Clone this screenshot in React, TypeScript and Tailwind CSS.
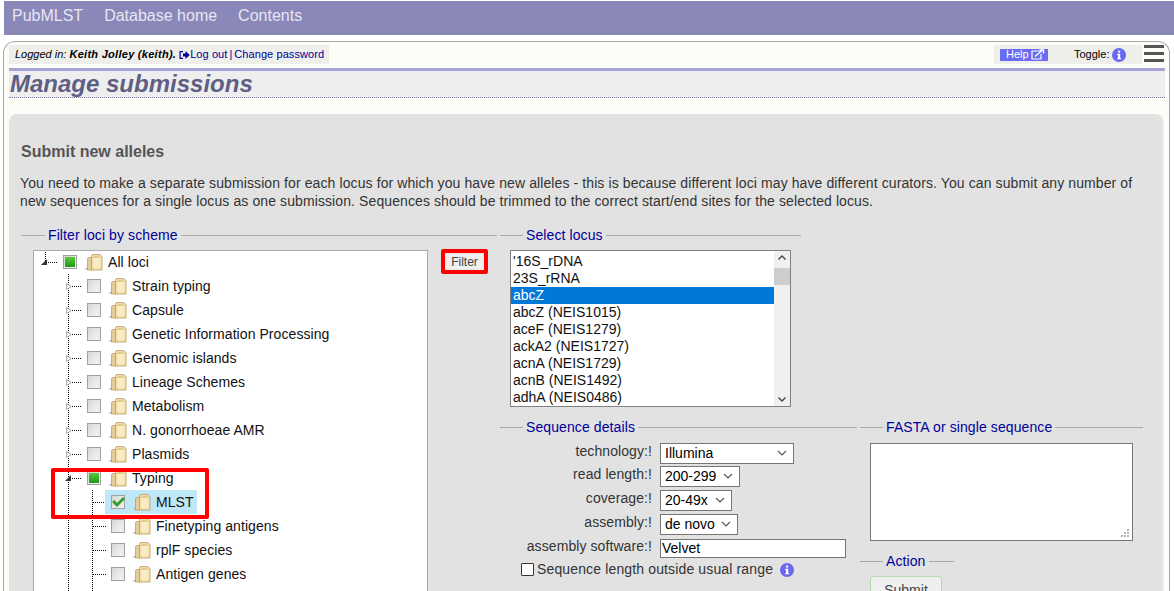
import React from "react";

const Folder = () => (
  <svg width="18" height="17" viewBox="0 0 18 17" className="shrink-0">
    <path d="M0 15 L3 12.5 L3 16 L1 16 Z" fill="#bdbdbd" />
    <path d="M2.5 5 Q2.5 3.5 4 3.5 L7.5 3.5 L7.5 16 L2.5 16 Z" fill="#e5cd97" stroke="#b3965c" strokeWidth="0.7" />
    <path d="M6.5 2 Q6.5 0.5 8 0.5 L14 0.5 Q15.5 0.5 16 2 L17 2.5 L17 16 L6.5 16 Z" fill="#f0dca6" stroke="#bd9f66" strokeWidth="0.8" />
    <path d="M8 4 L15.5 4 L15.5 14.5 L8 14.5 Z" fill="#f9ebc4" />
    <path d="M8 2.5 L15 2.5 L15 3.6 L8 3.6 Z" fill="#d8bd84" />
  </svg>
);

const Check = ({ state }: { state: "none" | "part" | "full" }) => (
  <svg width="14" height="14" viewBox="0 0 14 14" className="shrink-0">
    <defs>
      <linearGradient id="cb" x1="0" y1="0" x2="1" y2="1">
        <stop offset="0" stopColor="#d2d2d2" />
        <stop offset="0.5" stopColor="#e8e8e8" />
        <stop offset="1" stopColor="#f2f2f2" />
      </linearGradient>
      <linearGradient id="gr" x1="0" y1="0" x2="0" y2="1">
        <stop offset="0" stopColor="#58c83a" />
        <stop offset="1" stopColor="#1d9a12" />
      </linearGradient>
    </defs>
    <rect x="0.5" y="0.5" width="13" height="13" fill="url(#cb)" stroke="#a0a0a0" />
    {state === "part" && <rect x="2" y="2" width="10" height="10" fill="url(#gr)" />}
    {state === "full" && <path d="M1 7 L3.5 5 L6 8 L12 2 L14 4 L6 12 Z" fill="#2f9e24" />}
  </svg>
);

const Connector = ({ level, arrow }: { level: number; arrow?: "open" | "closed" }) => (
  <svg width={29 + 24 * level} height="24" className="shrink-0" shapeRendering="crispEdges">
    {level === 0 && <path d="M11.5 0 V12" stroke="#000" strokeDasharray="1 1" fill="none" />}
    {level >= 1 && <path d="M34.5 0 V24" stroke="#000" strokeDasharray="1 1" fill="none" />}
    {level === 2 && <path d="M58.5 0 V24" stroke="#000" strokeDasharray="1 1" fill="none" />}
    {level === 0 && (
      <>
        <path d="M14 12.5 H23" stroke="#000" strokeDasharray="1 1" fill="none" />
        <path d="M7 15 L13 9 L13 15 Z" fill="#333" shapeRendering="auto" />
      </>
    )}
    {level === 1 && (
      <>
        <path d="M38 12.5 H47" stroke="#000" strokeDasharray="1 1" fill="none" />
        {arrow === "closed" && <path d="M32.5 9.5 L37 12.5 L32.5 15.5 Z" fill="#fff" stroke="#aaa" shapeRendering="auto" />}
        {arrow === "open" && <path d="M31 15 L37 9 L37 15 Z" fill="#333" shapeRendering="auto" />}
      </>
    )}
    {level === 2 && <path d="M59 12.5 H72" stroke="#000" strokeDasharray="1 1" fill="none" />}
  </svg>
);

const rows: { t: string; l: number; a?: "open" | "closed"; c: "none" | "part" | "full" }[] = [
  { t: "All loci", l: 0, a: "open", c: "part" },
  { t: "Strain typing", l: 1, a: "closed", c: "none" },
  { t: "Capsule", l: 1, a: "closed", c: "none" },
  { t: "Genetic Information Processing", l: 1, a: "closed", c: "none" },
  { t: "Genomic islands", l: 1, a: "closed", c: "none" },
  { t: "Lineage Schemes", l: 1, a: "closed", c: "none" },
  { t: "Metabolism", l: 1, a: "closed", c: "none" },
  { t: "N. gonorrhoeae AMR", l: 1, a: "closed", c: "none" },
  { t: "Plasmids", l: 1, a: "closed", c: "none" },
  { t: "Typing", l: 1, a: "open", c: "part" },
  { t: "MLST", l: 2, c: "full" },
  { t: "Finetyping antigens", l: 2, c: "none" },
  { t: "rplF species", l: 2, c: "none" },
  { t: "Antigen genes", l: 2, c: "none" },
];

const loci = ["'16S_rDNA", "23S_rRNA", "abcZ", "abcZ (NEIS1015)", "aceF (NEIS1279)", "ackA2 (NEIS1727)", "acnA (NEIS1729)", "acnB (NEIS1492)", "adhA (NEIS0486)"];

const Info = ({ size }: { size: number }) => (
  <svg width={size} height={size} viewBox="0 0 14 14" className="shrink-0">
    <circle cx="7" cy="7" r="7" fill="#6868f0" />
    <rect x="6" y="2.6" width="2.2" height="2" fill="#fff" />
    <path d="M5.2 5.8 H8.2 V10 H9 V11.2 H5.2 V10 H6 V7 H5.2 Z" fill="#fff" />
  </svg>
);

const Chevron = () => (
  <svg width="10" height="6" viewBox="0 0 10 6" className="shrink-0">
    <path d="M1 1 L5 5 L9 1" fill="none" stroke="#555" strokeWidth="1.1" />
  </svg>
);

const Legend = ({ children, ml = "ml-6" }: { children: React.ReactNode; ml?: string }) => (
  <legend className={`${ml} px-[3px] text-[14px] leading-[16px] tracking-[0.1px] text-[#000099]`}>{children}</legend>
);

const FormSelect = ({ w, v }: { w: string; v: string }) => (
  <div className={`${w} h-[21px] bg-white border border-[#767676] flex items-center justify-between pl-[4px] pr-[6px] text-[14px] text-black`}>
    <span>{v}</span>
    <Chevron />
  </div>
);

const Row = ({ label, children }: { label: string; children: React.ReactNode }) => (
  <div className="flex items-center h-[24px]">
    <div className="w-[152px] text-right text-[14px] tracking-[0.08px] text-[#333] pb-[3px]">{label}:!</div>
    <div className="ml-[8px]">{children}</div>
  </div>
);

export default function App() {
  return (
    <div className="h-[591px] w-[1174px] overflow-hidden bg-white font-['Liberation_Sans',arial,sans-serif] pl-[3px] pr-[3px]">
      <nav className="ml-[1px] mr-[-3px] mt-[1px] h-[34px] bg-[#8a88b9] flex items-center pl-[8px] pb-[4px] gap-[21px] text-[16px] text-[#e6e6f2]">
        <span>PubMLST</span>
        <span>Database home</span>
        <span>Contents</span>
      </nav>

      <div className="mt-[6px] h-[560px] w-[1167px] rounded-t-[12px] border border-[#a8a8a8] border-b-0 bg-[#fdfdf8] px-[5px] pt-[3px] relative">
        <div className="flex h-[20px] items-start">
          <div className="h-[19px] w-[320px] bg-[#eeeeea] flex items-center pl-[6px] text-[11px] whitespace-nowrap">
            <i className="text-black">Logged in: <b className="tracking-[0.28px]">Keith Jolley (keith).</b></i>
            <svg width="11" height="10" viewBox="0 0 11 10" className="ml-[3px] shrink-0">
              <path d="M0.5 1 H4 V2.2 H1.7 V7.8 H4 V9 H0.5 Z" fill="#000099" />
              <path d="M4 3.5 H6.5 V1 L10.7 5 L6.5 9 V6.5 H4 Z" fill="#000099" />
            </svg>
            <span className="text-[#000099] tracking-[0.08px]">Log out</span>
            <span className="text-[#000099] px-[2px]">|</span>
            <span className="text-[#000099] tracking-[0.08px]">Change password</span>
          </div>
          <div className="ml-auto h-[19px] w-[148px] mr-[22px] bg-[#eeeeea] flex items-center pl-[6px] text-[11px]">
            <div className="h-[12px] w-[48px] bg-[#6a6af5] flex items-center pl-[6px] gap-[2px] text-white leading-none">
              Help
              <svg width="14" height="11" viewBox="0 0 14 11" className="shrink-0">
                <path d="M9 2 H1 V10 H10 V5" fill="none" stroke="#fff" strokeWidth="1.2" />
                <path d="M4 7.5 L11 1.5 M8.5 1 H12.5 V4.5" fill="none" stroke="#fff" strokeWidth="1.4" />
              </svg>
            </div>
            <span className="ml-[26px] text-black">Toggle:</span>
            <span className="ml-[3px]"><Info size={14} /></span>
          </div>
          <div className="absolute right-[5px] top-[3px] w-[20px] flex flex-col gap-[4px]">
            <div className="h-[3px] bg-[#555]" />
            <div className="h-[3px] bg-[#555]" />
            <div className="h-[3px] bg-[#555]" />
          </div>
        </div>

        <div className="mt-[3px] w-[1156px] h-[3px] bg-[#a5a2d4]" />
        <div className="w-[1156px] bg-[#eeeeee] h-[27px] border-b border-dotted border-b-[#7c7ca0]">
          <h1 className="pl-[1px] text-[24px] leading-[25px] font-bold italic text-[#5f5f85]">Manage submissions</h1>
        </div>

        <div className="mt-[16px] w-[1155px] h-[480px] rounded-t-[8px] bg-[#e2e2e2] border-r-2 border-[#ececec] pl-[11px] pt-[29px]">
          <h2 className="pl-[1px] text-[16px] leading-[18px] font-bold text-[#555]">Submit new alleles</h2>
          <p className="mt-[13px] w-[1125px] text-[14px] leading-[18px] tracking-[0.1px] text-[#333]">
            You need to make a separate submission for each locus for which you have new alleles - this is because different loci may have different curators. You can submit any number of new sequences for a single locus as one submission. Sequences should be trimmed to the correct start/end sites for the selected locus.
          </p>

          <div className="mt-[17px] flex items-start">
            <fieldset className="ml-[1px] w-[476px] h-[400px] border-t border-[#a8a8a8]">
              <Legend ml="ml-[24px]">Filter loci by scheme</Legend>
              <div className="mt-[7px] flex items-start">
                <div className="relative ml-[12px] w-[395px] h-[360px] bg-white border border-[#aaa] overflow-hidden">
                  <div className="-mt-[1px]">
                    {rows.map((r) => (
                      <div key={r.t} className="flex items-center h-[24px] text-[14px] tracking-[0.07px] text-[#111] whitespace-nowrap relative">
                        <Connector level={r.l} arrow={r.a} />
                        {r.c === "full" && <div className="absolute left-[71px] top-0 w-[92px] h-[24px] bg-[#bee8f8]" />}
                        <span className="relative"><Check state={r.c} /></span>
                        <span className="relative ml-[8px]"><Folder /></span>
                        <span className="relative ml-[5px]">{r.t}</span>
                      </div>
                    ))}
                    <div className="h-[24px]"><Connector level={2} /></div>
                  </div>
                  <div className="absolute left-[17px] top-[217px] w-[158px] h-[51px] border-4 border-[#ff0000] rounded-[2px]" />
                </div>
                <div className="ml-[13px] -mt-[1px] border-4 border-[#ff0000] rounded-[2px] h-[25px] w-[47px] flex">
                  <div className="w-full h-full bg-[#efefef] border border-[#e6e6e6] text-[12px] text-[#444] flex items-center justify-center">Filter</div>
                </div>
              </div>
            </fieldset>

            <div className="ml-[3px] w-[643px]">
              <fieldset className="w-[301px] border-t border-[#a8a8a8]">
                <Legend ml="ml-[23px]">Select locus</Legend>
                <div className="mt-[7px] ml-[10px] w-[281px] h-[157px] bg-white border border-[#808080] flex text-[14px] leading-[17px] text-[#111]">
                  <div className="flex-1 pt-[2px]">
                    {loci.map((l) => (
                      <div key={l} className={l === "abcZ" ? "h-[17px] pl-[2px] bg-[#0078d7] text-white" : "h-[17px] pl-[2px]"}>{l}</div>
                    ))}
                  </div>
                  <div className="w-[16px] bg-[#f0f0f0] flex flex-col items-center justify-between py-[4px] relative">
                    <svg width="8" height="5" viewBox="0 0 8 5"><path d="M0.5 4.5 L4 1 L7.5 4.5" fill="none" stroke="#444" strokeWidth="1.4" /></svg>
                    <div className="absolute top-[17px] left-0 w-[16px] h-[17px] bg-[#cdcdcd]" />
                    <svg width="8" height="5" viewBox="0 0 8 5"><path d="M0.5 0.5 L4 4 L7.5 0.5" fill="none" stroke="#444" strokeWidth="1.4" /></svg>
                  </div>
                </div>
              </fieldset>

              <div className="mt-[12px] flex items-start">
                <fieldset className="w-[357px] border-t border-[#a8a8a8]">
                  <Legend ml="ml-[23px]">Sequence details</Legend>
                  <div className="mt-[6px]">
                    <Row label="technology"><FormSelect w="w-[134px]" v="Illumina" /></Row>
                    <div className="-mt-[1px]">
                      <Row label="read length"><FormSelect w="w-[80px]" v="200-299" /></Row>
                      <Row label="coverage"><FormSelect w="w-[72px]" v="20-49x" /></Row>
                      <Row label="assembly"><FormSelect w="w-[78px]" v="de novo" /></Row>
                      <Row label="assembly software">
                        <div className="w-[186px] h-[19px] bg-white border border-[#767676] pl-[1px] text-[14px] leading-[17px] text-black">Velvet</div>
                      </Row>
                    </div>
                    <div className="mt-[-1px] ml-[21px] flex items-center text-[14px] tracking-[0.14px] text-[#333]">
                      <span className="w-[13px] h-[13px] bg-white border border-[#333] rounded-[1px] mr-[3px]" />
                      <span>Sequence length outside usual range</span>
                      <span className="ml-[7px]"><Info size={14} /></span>
                    </div>
                  </div>
                </fieldset>
                <div className="ml-[3px]">
                  <fieldset className="w-[283px] border-t border-[#a8a8a8]">
                    <Legend ml="ml-[23px]">FASTA or single sequence</Legend>
                    <div className="mt-[8px] ml-[10px] w-[263px] h-[98px] bg-white border-[1.5px] border-[#767676] relative">
                      <svg width="10" height="10" viewBox="0 0 10 10" className="absolute right-[2px] bottom-[2px]">
                        <path d="M7 1h2v2H7zM4 4h2v2H4zM7 4h2v2H7zM1 7h2v2H1zM4 7h2v2H4zM7 7h2v2H7z" fill="#b5b5b5" />
                      </svg>
                    </div>
                  </fieldset>
                  <fieldset className="mt-[12px] w-[94px] border-t border-[#a8a8a8]">
                    <Legend ml="ml-[23px]">Action</Legend>
                    <div className="mt-[7px] ml-[10px] w-[72px] h-[28px] bg-[#efefef] border border-[#b0dcb0] rounded-[3px] text-[14px] text-[#444] flex items-center justify-center">Submit</div>
                  </fieldset>
                </div>
              </div>
            </div>
          </div>
        </div>
      </div>
    </div>
  );
}
